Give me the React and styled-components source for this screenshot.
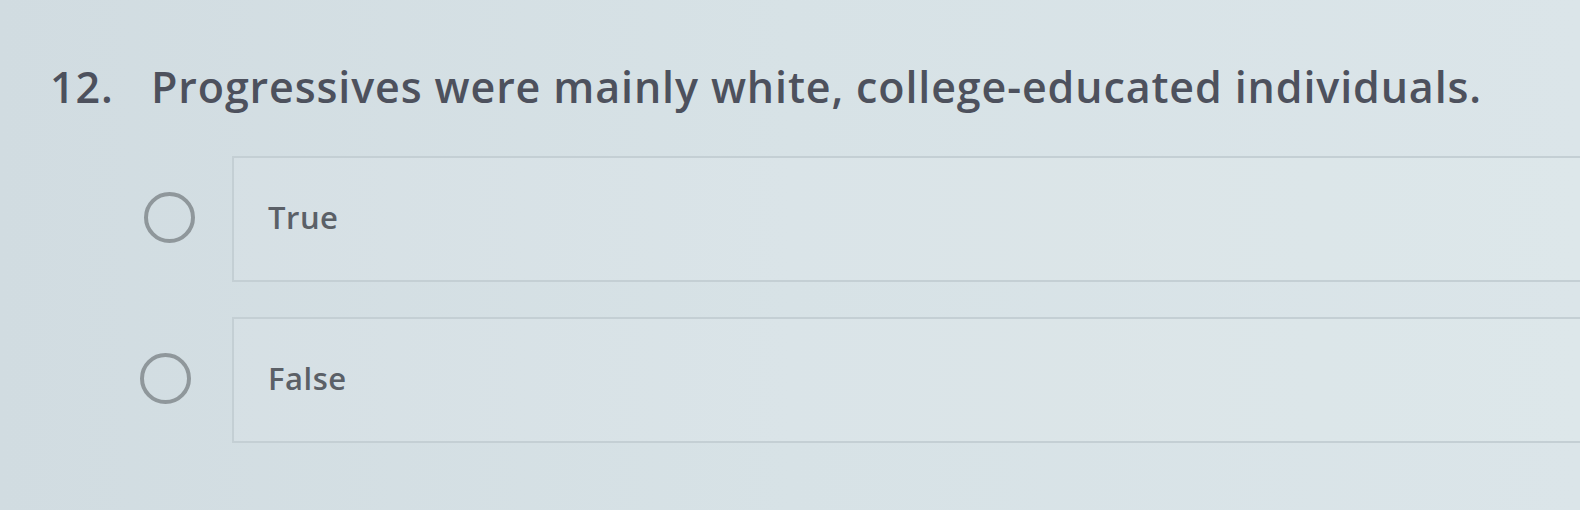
import styled, { createGlobalStyle } from "styled-components";

const GlobalStyle = createGlobalStyle`
  html, body {
    margin: 0;
    padding: 0;
    overflow: hidden;
  }
  body {
    background: linear-gradient(90deg, #d1dce1 0%, #d7e2e6 50%, #dbe5e9 100%);
    font-family: "Open Sans", "Liberation Sans", sans-serif;
  }
`;

const Page = styled.div`
  width: 1580px;
  height: 510px;
  padding: 58px 0 0 50px;
  box-sizing: border-box;
`;

const Question = styled.h2`
  display: flex;
  margin: 0;
  font-size: 43px;
  font-weight: 600;
  line-height: 58px;
  letter-spacing: 0.88px;
  color: #4d515d;
`;

const Number = styled.span`
  width: 101px;
  flex-shrink: 0;
`;

const Options = styled.div`
  display: flex;
  flex-direction: column;
  gap: 35px;
  margin-top: 40px;
  margin-left: ${(p) => p.$indent}px;
`;

const Option = styled.label`
  display: flex;
  align-items: stretch;
`;

const RadioCell = styled.div`
  width: 90px;
  flex-shrink: 0;
  display: flex;
  align-items: center;
`;

const Radio = styled.span`
  width: 51px;
  height: 51px;
  border-radius: 50%;
  border: 4px solid #8f979b;
  box-sizing: border-box;
  margin-left: ${(p) => p.$shift}px;
  margin-bottom: 4px;
`;

const Box = styled.div`
  flex: 1;
  height: 126px;
  margin-right: -20px;
  border: 2px solid #c4cfd4;
  border-right: none;
  background: rgba(255, 255, 255, 0.08);
  display: flex;
  align-items: center;
  padding-left: 34px;
  padding-bottom: 4px;
  box-sizing: border-box;
  font-family: "Open Sans", "Liberation Sans", sans-serif;
  font-size: 31px;
  font-weight: 600;
  letter-spacing: 0.5px;
  color: #5b6067;
`;

const options = [
  { label: "True", shift: 2 },
  { label: "False", shift: -2 },
];

export default function App() {
  return (
    <>
      <GlobalStyle />
      <Page>
        <Question>
          <Number>12.</Number>
          Progressives were mainly white, college-educated individuals.
        </Question>
        <Options $indent={92}>
          {options.map((o) => (
            <Option key={o.label}>
              <RadioCell>
                <Radio $shift={o.shift} />
              </RadioCell>
              <Box>{o.label}</Box>
            </Option>
          ))}
        </Options>
      </Page>
    </>
  );
}
